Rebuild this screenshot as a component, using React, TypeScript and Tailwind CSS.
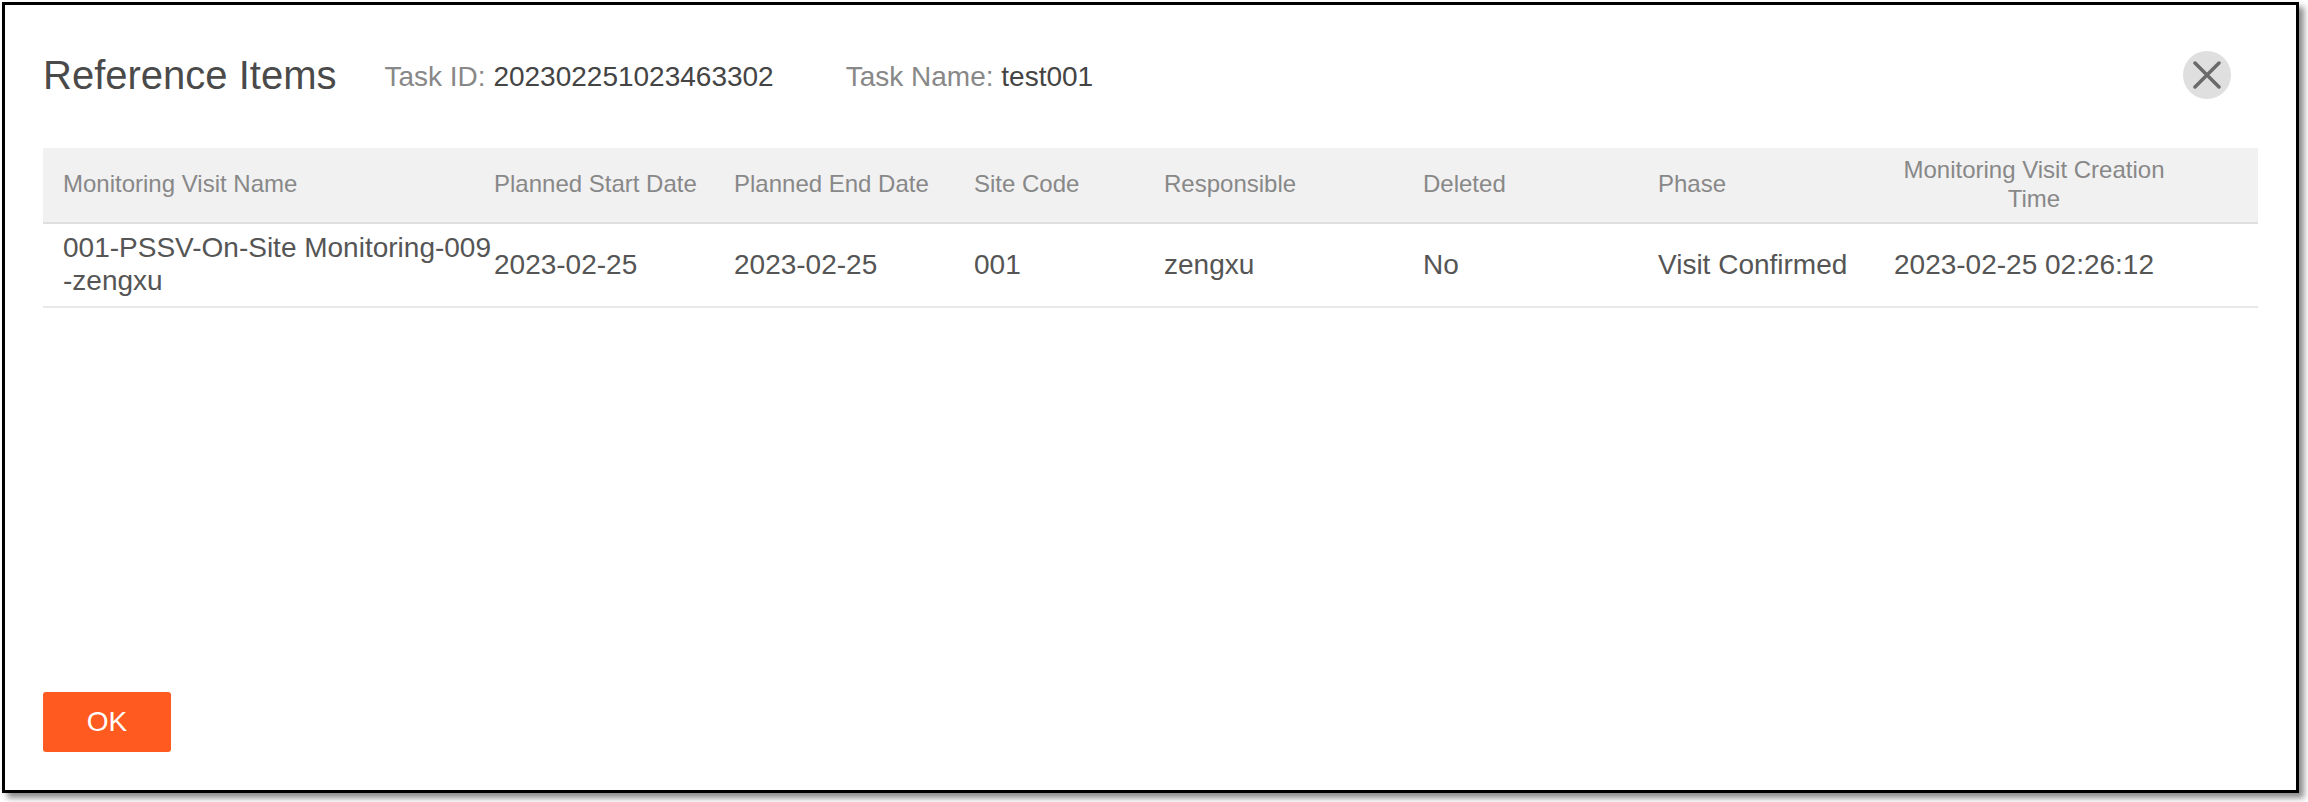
import React from 'react';

const columns = [
  { key: 'name', label: 'Monitoring Visit Name', value: '001-PSSV-On-Site Monitoring-009-zengxu', width: 'w-[451px] pl-5' },
  { key: 'start', label: 'Planned Start Date', value: '2023-02-25', width: 'w-[240px]' },
  { key: 'end', label: 'Planned End Date', value: '2023-02-25', width: 'w-[240px]' },
  { key: 'site', label: 'Site Code', value: '001', width: 'w-[190px]' },
  { key: 'owner', label: 'Responsible', value: 'zengxu', width: 'w-[259px]' },
  { key: 'deleted', label: 'Deleted', value: 'No', width: 'w-[235px]' },
  { key: 'phase', label: 'Phase', value: 'Visit Confirmed', width: 'w-[236px]' },
];

const CloseIcon = () => (
  <svg className="w-7 h-7" viewBox="0 0 28 28" fill="none" stroke="#6a6a6a" strokeWidth={3.5} strokeLinecap="round">
    <path d="M2 2l24 24M26 2L2 26" />
  </svg>
);

export default function App() {
  return (
    <div className="w-[2308px] h-[802px] bg-white pt-0.5 pl-0.5 font-['Liberation_Sans',Arial,sans-serif]">
      <div className="flex flex-col w-[2297px] h-[791px] bg-white border-[3px] border-black px-[38px] pb-[38px] shadow-[5px_5px_6px_rgba(0,0,0,0.45)]">
        <div className="flex items-center h-[60px] mt-[40px] mb-[43px]">
          <h2 className="text-[40px] font-normal text-[#4a4a4a]">Reference Items</h2>
          <div className="ml-[48px] pt-[4px] text-[28px] text-[#888888]">
            Task ID: <span className="text-[#444444]">202302251023463302</span>
          </div>
          <div className="ml-[72px] pt-[4px] text-[28px] text-[#888888]">
            Task Name: <span className="text-[#444444]">test001</span>
          </div>
          <button className="ml-auto mr-[27px] flex items-center justify-center w-12 h-12 rounded-full bg-[#dfdfdf]" aria-label="Close">
            <CloseIcon />
          </button>
        </div>

        <table className="w-full table-fixed border-collapse">
          <thead>
            <tr className="h-[75px] bg-[#f1f1f1] border-b-2 border-[#dfdfdf]">
              {columns.map((col) => (
                <th key={col.key} className={`${col.width} pb-[3px] text-left text-[24px] leading-[29px] font-normal text-[#888888]`}>
                  {col.label}
                </th>
              ))}
              <th className="pb-[3px] text-[24px] leading-[29px] font-normal text-[#888888]">
                <div className="w-[280px] text-center">Monitoring Visit Creation Time</div>
              </th>
            </tr>
          </thead>
          <tbody>
            <tr className="h-[84px] border-b-2 border-[#e8e8e8]">
              {columns.map((col) => (
                <td key={col.key} className={`${col.width} pb-[2px] text-[28px] leading-[33px] text-[#555555] break-all`}>
                  {col.value}
                </td>
              ))}
              <td className="pb-[2px] text-[28px] leading-[33px] text-[#555555]">2023-02-25 02:26:12</td>
            </tr>
          </tbody>
        </table>

        <button className="mt-auto w-32 h-[60px] rounded-[3px] bg-[#ff5a1f] text-[28px] text-white">OK</button>
      </div>
    </div>
  );
}
